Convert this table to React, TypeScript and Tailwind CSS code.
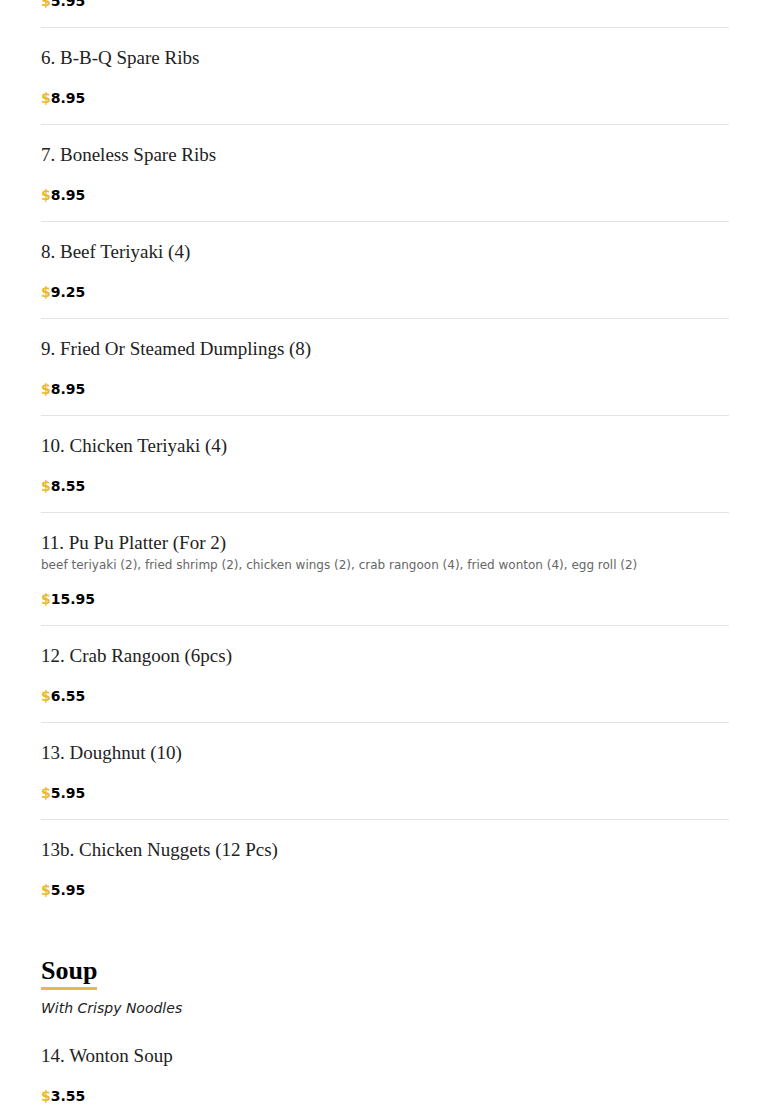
type MenuItem = {
    name: string;
    price: string;
    description?: string;
};

const appetizers: MenuItem[] = [
    { name: '5. Chicken Wings (4)', price: '5.95' },
    { name: '6. B-B-Q Spare Ribs', price: '8.95' },
    { name: '7. Boneless Spare Ribs', price: '8.95' },
    { name: '8. Beef Teriyaki (4)', price: '9.25' },
    { name: '9. Fried Or Steamed Dumplings (8)', price: '8.95' },
    { name: '10. Chicken Teriyaki (4)', price: '8.55' },
    {
        name: '11. Pu Pu Platter (For 2)',
        price: '15.95',
        description: 'beef teriyaki (2), fried shrimp (2), chicken wings (2), crab rangoon (4), fried wonton (4), egg roll (2)',
    },
    { name: '12. Crab Rangoon (6pcs)', price: '6.55' },
    { name: '13. Doughnut (10)', price: '5.95' },
    { name: '13b. Chicken Nuggets (12 Pcs)', price: '5.95' },
];

const soups: MenuItem[] = [
    { name: '14. Wonton Soup', price: '3.55' },
];

const serif = "font-['Liberation_Serif',serif]";
const sans = "font-['DejaVu_Sans',sans-serif]";

const Item = ({ item, first }: { item: MenuItem; first: boolean }) => (
    <div className={first ? 'pt-4 pb-4' : 'border-t border-[#e3e3e3] pt-4 pb-4'}>
        <h3 className={`${serif} text-[19px] leading-[28px] text-[#222]`}>{item.name}</h3>
        {item.description && (
            <p className={`${sans} text-[12px] leading-[16px] text-[#666]`}>{item.description}</p>
        )}
        <div className={`${sans} mt-4 text-[14px] leading-[20px] font-bold text-black`}>
            <span className="text-[#e8b92a]">$</span>{item.price}
        </div>
    </div>
);

const App = () => {
    return (
        <div className="bg-white min-h-screen overflow-hidden">
            <div className="px-[41px] w-[770px] -mt-[69px]">
                <section>
                    {appetizers.map((item, i) => (
                        <Item key={item.name} item={item} first={i === 0} />
                    ))}
                </section>
                <section className="mt-[40px]">
                    <h2 className={`${serif} inline-block text-[26px] leading-[30px] font-bold text-black border-b-[3px] border-[#e8b94a] pb-[1px]`}>Soup</h2>
                    <p className={`${sans} italic text-[14px] leading-[20px] text-[#222] mt-[8px]`}>With Crispy Noodles</p>
                    <div className="mt-[8px]">
                        {soups.map((item, i) => (
                            <Item key={item.name} item={item} first={i === 0} />
                        ))}
                    </div>
                </section>
            </div>
        </div>
    );
};

export default App;
